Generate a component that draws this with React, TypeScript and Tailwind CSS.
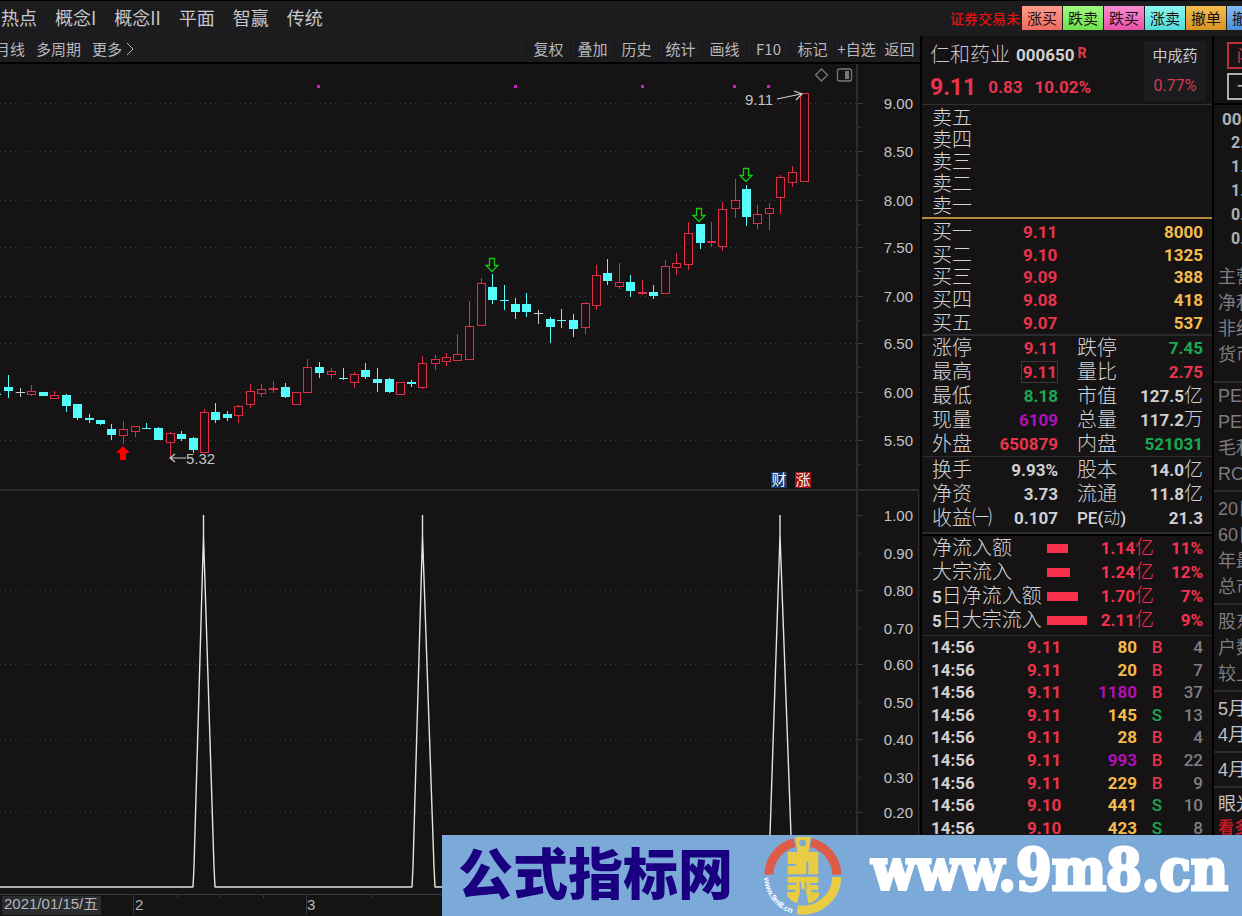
import React from "react";

type Kind = "up" | "down" | "flat";
type Candle = [x: number, high: number, top: number, bottom: number, low: number, kind: Kind];

const CANDLES: Candle[] = [
  [8, 375, 387, 391, 398, "down"],
  [20, 388, 392, 392, 397, "flat"],
  [31, 385, 391, 394, 396, "up"],
  [43, 392, 392, 396, 396, "down"],
  [54, 391, 395, 398, 398, "up"],
  [66, 394, 395, 406, 412, "down"],
  [77, 404, 404, 418, 420, "down"],
  [89, 414, 418, 420, 423, "down"],
  [100, 420, 420, 424, 425, "down"],
  [111, 424, 429, 435, 440, "down"],
  [123, 421, 429, 435, 444, "up"],
  [135, 426, 426, 431, 437, "up"],
  [146, 423, 428, 428, 429, "down"],
  [158, 427, 428, 440, 440, "down"],
  [170, 432, 433, 442, 458, "up"],
  [181, 431, 434, 439, 441, "down"],
  [193, 437, 438, 450, 453, "down"],
  [204, 409, 412, 452, 453, "up"],
  [215, 403, 412, 420, 423, "down"],
  [227, 411, 414, 418, 421, "down"],
  [238, 405, 406, 415, 423, "up"],
  [250, 384, 391, 404, 408, "up"],
  [261, 384, 389, 393, 397, "up"],
  [273, 381, 388, 390, 393, "up"],
  [285, 383, 387, 397, 398, "down"],
  [296, 392, 392, 404, 404, "up"],
  [307, 359, 367, 392, 392, "up"],
  [319, 362, 367, 373, 378, "down"],
  [331, 368, 371, 374, 379, "up"],
  [343, 368, 378, 378, 380, "down"],
  [354, 372, 374, 382, 388, "up"],
  [365, 363, 370, 377, 379, "down"],
  [377, 368, 379, 383, 392, "down"],
  [389, 378, 379, 392, 393, "down"],
  [400, 382, 382, 394, 395, "up"],
  [411, 380, 382, 384, 387, "down"],
  [422, 356, 363, 387, 389, "up"],
  [435, 355, 359, 363, 370, "up"],
  [446, 353, 357, 361, 366, "up"],
  [457, 334, 354, 360, 361, "up"],
  [469, 301, 326, 359, 359, "up"],
  [481, 278, 283, 325, 325, "up"],
  [492, 274, 287, 300, 304, "down"],
  [504, 285, 300, 300, 310, "down"],
  [515, 298, 304, 312, 319, "down"],
  [526, 293, 304, 312, 317, "down"],
  [538, 310, 313, 313, 324, "flat"],
  [550, 317, 319, 327, 343, "down"],
  [561, 309, 320, 320, 328, "down"],
  [573, 314, 320, 329, 337, "down"],
  [585, 302, 303, 327, 334, "up"],
  [596, 265, 275, 305, 310, "up"],
  [607, 259, 273, 281, 285, "down"],
  [619, 263, 282, 286, 289, "up"],
  [630, 275, 282, 291, 297, "down"],
  [642, 280, 292, 294, 295, "up"],
  [653, 285, 292, 296, 299, "down"],
  [665, 260, 266, 293, 293, "up"],
  [676, 253, 263, 267, 275, "up"],
  [688, 222, 233, 264, 270, "up"],
  [700, 224, 224, 243, 249, "down"],
  [711, 222, 241, 243, 247, "up"],
  [722, 202, 209, 246, 251, "up"],
  [735, 179, 200, 208, 218, "up"],
  [746, 185, 189, 217, 226, "down"],
  [757, 205, 214, 223, 229, "up"],
  [769, 203, 208, 213, 230, "up"],
  [780, 175, 177, 197, 214, "up"],
  [792, 166, 172, 182, 187, "up"],
  [804, 93, 93, 181, 181, "up"],
];

const PRICE_AXIS: [number, string][] = [
  [103, "9.00"], [151, "8.50"], [200, "8.00"], [247, "7.50"],
  [296, "7.00"], [343, "6.50"], [392, "6.00"], [440, "5.50"],
];
const SIGNAL_AXIS: [number, string, boolean][] = [
  [515, "1.00", false], [553, "0.90", false], [590, "0.80", true],
  [628, "0.70", false], [664, "0.60", true], [702, "0.50", false],
  [739, "0.40", true], [777, "0.30", false], [812, "0.20", true],
];

function CandleShape({ c }: { c: Candle }) {
  const [x, high, top, bottom, low, kind] = c;
  const color = kind === "up" ? "#dc3048" : kind === "down" ? "#54fcfc" : "#c8c8c8";
  if (top === bottom) {
    return (
      <g fill={color}>
        <rect x={x} y={high} width={1} height={low - high} />
        <rect x={x - 4} y={top} width={9} height={1} />
      </g>
    );
  }
  if (kind === "up" && bottom - top > 2) {
    return (
      <g>
        <rect x={x} y={high} width={1} height={top - high} fill={color} />
        <rect x={x} y={bottom} width={1} height={low - bottom} fill={color} />
        <rect x={x - 3.5} y={top + 0.5} width={8} height={bottom - top} fill="#1e0f15" stroke={color} />
      </g>
    );
  }
  return (
    <g fill={color}>
      <rect x={x} y={high} width={1} height={low - high} />
      <rect x={x - 4} y={top} width={9} height={bottom - top} />
    </g>
  );
}

function Chart() {
  return (
    <svg
      viewBox="0 64 920 852"
      className="block h-auto w-full font-['Liberation_Sans','Noto_Sans_CJK_SC',sans-serif]"
      role="img"
      aria-label="K线图"
    >
      <g stroke="#3b3b3d" strokeDasharray="1 4" shapeRendering="crispEdges">
        {PRICE_AXIS.map(([y]) => <line key={y} x1={0} x2={857} y1={y + 0.5} y2={y + 0.5} />)}
        {SIGNAL_AXIS.filter((a) => a[2]).map(([y]) => (
          <line key={y} x1={0} x2={857} y1={y + 0.5} y2={y + 0.5} />
        ))}
      </g>
      <g stroke="#38383f" shapeRendering="crispEdges">
        <line x1={857} x2={857} y1={64} y2={895} strokeWidth={2} stroke="#2c2c36" />
        <line x1={0} x2={918} y1={490} y2={490} strokeWidth={2} stroke="#2d2d31" />
        <line x1={918.5} x2={918.5} y1={490} y2={916} stroke="#2c2c33" />
        <line x1={0} x2={918} y1={894.5} y2={894.5} />
        {PRICE_AXIS.map(([y]) => (
          <g key={y}>
            <line x1={858} x2={863} y1={y + 0.5} y2={y + 0.5} />
            <line x1={858} x2={860} y1={y + 24.5} y2={y + 24.5} />
          </g>
        ))}
        {SIGNAL_AXIS.map(([y, , major], i) => (
          <line key={y} x1={858} x2={major || i === 0 ? 863 : 860} y1={y + 0.5} y2={y + 0.5} />
        ))}
        {[177, 220, 263, 372].map((x) => <line key={x} x1={x + 0.5} x2={x + 0.5} y1={894} y2={898} />)}
        {[133, 306].map((x) => <line key={x} x1={x + 0.5} x2={x + 0.5} y1={894} y2={914} />)}
      </g>
      <g fill="#c4c4c6" fontSize={15} textAnchor="end">
        {PRICE_AXIS.map(([y, t]) => <text key={t} x={913} y={y + 6}>{t}</text>)}
        {SIGNAL_AXIS.map(([y, t]) => <text key={t} x={913} y={y + 6}>{t}</text>)}
      </g>

      <g shapeRendering="crispEdges">
        <rect x={0} y={394} width={1} height={1} fill="#54fcfc" />
        {CANDLES.map((c) => <CandleShape key={c[0]} c={c} />)}
      </g>
      <g fill="#c822c8">
        {[318, 515, 642, 734, 768].map((x) => (
          <rect key={x} x={x - 1} y={85} width={3} height={3} />
        ))}
      </g>

      <g fill="none" stroke="#14c814" strokeWidth={1.3}>
        {[[492, 258], [699, 208], [746, 168]].map(([x, y]) => (
          <path key={x} d={`M${x - 2.5} ${y + 0.5}h5v7h3.5l-6 6l-6 -6h3.5z`} />
        ))}
      </g>
      <path d="M123 446l7 7h-4v7h-6v-7h-4z" fill="#ff0000" />

      <g fill="none" stroke="#cfcfcf" strokeWidth={1.2}>
        <path d="M186 458H170M175 454l-5 4l5 4" />
        <path d="M777 99L801 94M794 91l8 3l-6 6" />
      </g>
      <g fill="#c4c4c6" fontSize={15}>
        <text x={186} y={464}>5.32</text>
        <text x={745} y={105}>9.11</text>
      </g>

      <g fill="none" stroke="#77777a" strokeWidth={1.3}>
        <path d="M821.500 69l6 6l-6 6l-6 -6z" />
        <rect x={837.500} y={69} width={14} height={12} rx={2} />
      </g>
      <rect x={845} y={71} width={4} height={8} fill="#77777a" />

      <rect x={771} y={472} width={16} height={16} fill="#123a64" />
      <rect x={795} y={472} width={16} height={16} fill="#a01016" />
      <g fill="#f4f4f4" fontSize={15} textAnchor="middle">
        <text x={779} y={485}>财</text>
        <text x={803} y={485}>涨</text>
      </g>

      <g fill="none" stroke="#e4e4e4" strokeWidth={1.4} strokeLinejoin="bevel">
        <path d="M0 887H193L194 867L203.500 535V515V535L214 867L215 887H412L413 867L422.500 535V515V535L434 867L435 887H769L770 835L780 535V515V535L791 835L792 887H857" />
      </g>

      <rect x={2} y={896} width={99} height={19} fill="#2a2c30" />
      <g fill="#b4b6ba" fontSize={15}>
        <text x={4} y={909}>2021/01/15/五</text>
        <text x={135} y={910}>2</text>
        <text x={307} y={910}>3</text>
      </g>
    </svg>
  );
}

const NAV = ["热点", "概念I", "概念II", "平面", "智赢", "传统"];
const TOOLS = ["复权", "叠加", "历史", "统计", "画线", "F10", "标记", "+自选", "返回"];
const ORDERS: [string, string][] = [
  ["涨买", "from-[#ff9a8c] to-[#f06a5e]"],
  ["跌卖", "from-[#a0fa80] to-[#6ee04e]"],
  ["跌买", "from-[#f88cd0] to-[#e850a8]"],
  ["涨卖", "from-[#8cf6f0] to-[#50dcd8]"],
  ["撤单", "from-[#f4bc50] to-[#d89420]"],
  ["撤买", "from-[#80bcf4] to-[#4c90dc]"],
];

function TopBar() {
  return (
    <header className="flex h-9 justify-between overflow-hidden border-t border-black bg-[#1c1c1e]">
      <nav className="flex gap-[18px] pl-px pt-1 text-[18px] leading-6">
        {NAV.map((t) => <a key={t} href="#" className="whitespace-nowrap">{t}</a>)}
      </nav>
      <div className="flex w-[292px] shrink-0 items-start overflow-hidden pt-[5px]">
        <span className="w-[72px] shrink-0 overflow-hidden whitespace-nowrap text-[14px] font-medium leading-6 text-[#e01010]">
          证券交易未
        </span>
        <div className="flex gap-px">
          {ORDERS.map(([t, c]) => (
            <button key={t} className={`h-6 w-10 shrink-0 whitespace-nowrap bg-linear-to-b text-[15px] leading-6 text-[#181010] ${c}`}>
              {t}
            </button>
          ))}
        </div>
      </div>
    </header>
  );
}

function Toolbar() {
  return (
    <div className="flex h-7 items-center justify-between overflow-hidden border-b-2 border-black bg-[#1c1c1e] text-[15px] leading-5 text-[#b8b8bc]">
      <div className="-ml-[5px] flex items-center gap-[11px]">
        <button>月线</button>
        <button>多周期</button>
        <button className="flex items-center gap-1">
          更多
          <svg width="9" height="14" viewBox="0 0 9 14" fill="none" stroke="currentColor" aria-hidden="true">
            <path d="M1 1l6 6l-6 6" />
          </svg>
        </button>
      </div>
      <div className="flex">
        {TOOLS.map((t) => (
          <button key={t} className="w-[44px] whitespace-nowrap border-l border-[#141416] text-center last:w-[42px]">
            <span className="-mx-1">{t}</span>
          </button>
        ))}
      </div>
    </div>
  );
}

const RED = "text-[#e8344c]";
const GREEN = "text-[#1ca850]";
const PURPLE = "text-[#b010b8]";
const WHITE = "text-[#d0d0d4]";
const GOLD = "text-[#f4bc4c]";

const BUYS = [["买一", "9.11", "8000"], ["买二", "9.10", "1325"], ["买三", "9.09", "388"], ["买四", "9.08", "418"], ["买五", "9.07", "537"]];

type Stat = [string, string, string, string, string, string];
const STATS_A: Stat[] = [
  ["涨停", "9.11", RED, "跌停", "7.45", GREEN],
  ["最高", "9.11", RED, "量比", "2.75", RED],
  ["最低", "8.18", GREEN, "市值", "127.5亿", WHITE],
  ["现量", "6109", PURPLE, "总量", "117.2万", WHITE],
  ["外盘", "650879", RED, "内盘", "521031", GREEN],
];
const STATS_B: Stat[] = [
  ["换手", "9.93%", WHITE, "股本", "14.0亿", WHITE],
  ["净资", "3.73", WHITE, "流通", "11.8亿", WHITE],
  ["收益㈠", "0.107", WHITE, "PE(动)", "21.3", WHITE],
];
const FLOWS: [string, string, string, string][] = [
  ["净流入额", "w-[21px]", "1.14亿", "11%"],
  ["大宗流入", "w-[23px]", "1.24亿", "12%"],
  ["5日净流入额", "w-[31px]", "1.70亿", "7%"],
  ["5日大宗流入", "w-[40px]", "2.11亿", "9%"],
];
const TICKS: [string, string, string, string][] = [
  ["9.11", "80", "B", "4"], ["9.11", "20", "B", "7"], ["9.11", "1180", "B", "37"],
  ["9.11", "145", "S", "13"], ["9.11", "28", "B", "4"], ["9.11", "993", "B", "22"],
  ["9.11", "229", "B", "9"], ["9.10", "441", "S", "10"], ["9.10", "423", "S", "8"],
];

/* Digits are set bold, Chinese units stay light. */
function Value({ text }: { text: string }) {
  const unit = /[亿万]$/.test(text) ? text.slice(-1) : "";
  return (
    <>
      {unit ? text.slice(0, -1) : text}
      {unit && <span className="text-[19px] font-light">{unit}</span>}
    </>
  );
}

const LABEL = "text-left font-light whitespace-nowrap text-[#d4d4d8]";

function StatTable({ rows, boxed }: { rows: Stat[]; boxed?: boolean }) {
  return (
    <table className="w-full table-fixed border-collapse font-bold">
      <colgroup>
        <col className="w-[56px]" />
        <col className="w-[70px]" />
        <col className="w-[75px]" />
        <col />
      </colgroup>
      <tbody>
        {rows.map(([l1, v1, c1, l2, v2, c2]) => (
          <tr key={l1} className="h-6 leading-6">
            <th className={`text-[20px] ${LABEL}`}>{l1}</th>
            <td className={`text-right ${c1}`}>
              {boxed && l1 === "最高" ? (
                <span className="inline-block border border-[#3a3a3c] pl-px leading-5">{v1}</span>
              ) : (
                v1
              )}
            </td>
            {l2.startsWith("PE") ? (
              <th className={`pl-[19px] text-[17px] ${LABEL}`}>
                <span className="font-medium">PE(</span>动<span className="font-medium">)</span>
              </th>
            ) : (
              <th className={`pl-[19px] text-[20px] ${LABEL}`}>{l2}</th>
            )}
            <td className={`whitespace-nowrap text-right ${c2}`}><Value text={v2} /></td>
          </tr>
        ))}
      </tbody>
    </table>
  );
}

function QuotePanel() {
  return (
    <section className="flex w-[292px] shrink-0 flex-col border-l-2 border-black font-['Roboto','Noto_Sans_CJK_SC',sans-serif] text-[17px]">
      <div className="flex h-[69px] justify-between border-b border-[#303034] pl-2 pr-[6px]">
        <div className="flex flex-col">
          <h1 className="flex h-9 items-center gap-[6px] whitespace-nowrap pt-px text-[20px] font-light leading-6">
            仁和药业
            <span className="text-[17px] font-bold text-[#d0d0d4]">000650</span>
            <span className="-ml-[3px] pb-1 text-[14px] font-bold leading-4 text-[#e03c48]">R</span>
          </h1>
          <p className="flex h-8 items-center gap-3 font-bold text-[#e8344c]">
            <span className="text-[23px]">9.11</span>
            <span>0.83</span>
            <span>10.02%</span>
          </p>
        </div>
        <div className="mt-[5px] flex h-[60px] w-[62px] flex-col items-center justify-between bg-[#1b1c1f] py-[5px] text-[15px] leading-5">
          <span>中成药</span>
          <span className="text-[16px] text-[#d83850]">0.77%</span>
        </div>
      </div>

      <div className="grid h-[114px] auto-rows-fr border-b-2 border-[#b48c3c] pl-[10px] pt-[2px]">
        {["卖五", "卖四", "卖三", "卖二", "卖一"].map((t) => (
          <div key={t} className="flex items-center text-[20px] font-light leading-5 text-[#d4d4d8]">{t}</div>
        ))}
      </div>

      <div className="grid h-[117px] auto-rows-fr border-b-2 border-[#2c2c30] pl-[10px] pr-[9px] pt-[2px] font-bold">
        {BUYS.map(([l, p, v]) => (
          <div key={l} className="flex items-center leading-5">
            <span className="w-[91px] text-[20px] font-light text-[#d4d4d8]">{l}</span>
            <span className={RED}>{p}</span>
            <span className="ml-auto text-[#f4bc4c]">{v}</span>
          </div>
        ))}
      </div>

      <div className="border-b border-[#2c2c30] pl-[10px] pr-[9px]">
        <StatTable rows={STATS_A} boxed />
      </div>
      <div className="border-b-2 border-[#2c2c30] pb-[2px] pl-[10px] pr-[9px] pt-px">
        <StatTable rows={STATS_B} />
      </div>

      <div className="border-b border-t-2 border-[#2c2c30] border-t-black pb-[3px] pl-[10px] pr-[9px] font-bold text-[#f8304c]">
        {FLOWS.map(([l, w, v, p]) => (
          <div key={l} className="flex h-6 items-center whitespace-nowrap leading-6">
            <span className="w-[115px] text-[20px] font-light text-[#d4d4d8]">
              {l.startsWith("5") ? <><span className="text-[17px] font-bold">5</span>{l.slice(1)}</> : l}
            </span>
            <span className={`h-[9px] bg-[#f8304c] ${w}`} />
            <span className="ml-auto"><Value text={v} /></span>
            <span className="w-[49px] text-right">{p}</span>
          </div>
        ))}
      </div>

      <table className="h-[203px] w-full table-fixed border-collapse font-bold leading-5">
        <colgroup>
          <col className="w-[105px]" />
          <col className="w-[34px]" />
          <col className="w-[76px]" />
          <col className="w-[40px]" />
          <col />
        </colgroup>
        <tbody>
          {TICKS.map(([p, v, side, n], i) => (
            <tr key={i}>
              <td className={`pl-[9px] ${WHITE}`}>14:56</td>
              <td className={`whitespace-nowrap ${RED}`}>{p}</td>
              <td className={`text-right ${v === "1180" || v === "993" ? PURPLE : GOLD}`}>{v}</td>
              <td className={`text-center font-medium ${side === "B" ? RED : GREEN}`}>{side}</td>
              <td className="pr-[9px] text-right font-medium text-[#808084]">{n}</td>
            </tr>
          ))}
        </tbody>
      </table>
    </section>
  );
}

function Group({ items, className = "" }: { items: string[]; className?: string }) {
  return (
    <div className={`border-b-2 border-[#2c2c30] pl-1 leading-[26px] ${className}`}>
      {items.map((t, i) => <div key={i}>{t}</div>)}
    </div>
  );
}

function SidePanel() {
  return (
    <aside className="w-[30px] shrink-0 overflow-hidden whitespace-nowrap border-l-2 border-black font-['Liberation_Sans','Noto_Sans_CJK_SC',sans-serif] text-[18px] text-[#7c7c80]">
      <div className="flex h-[69px] flex-col gap-1 border-b-2 border-black pl-[13px] pt-[6px]">
        <button className="h-[27px] w-12 shrink-0 border-2 border-[#c02c3c] pl-2 text-left text-[16px] leading-[22px] text-[#e03448]">闪买</button>
        <button className="h-[27px] w-12 shrink-0 border-2 border-[#b0b0b4] pl-2 text-left leading-5 text-[#c0c0c4]">一</button>
      </div>
      <div className="pb-[13px] pl-[17px] pt-[2px] font-['Roboto',sans-serif] text-[16px] font-bold leading-6 text-[#b0b0b4]">
        <div className="-ml-[9px] text-[17px]">000</div>
        {["2.", "1.", "1.", "0.", "0."].map((t, i) => <div key={i}>{t}</div>)}
      </div>
      <Group items={["主营", "净利", "非经", "货币"]} className="pb-[13px]" />
      <Group items={["PE", "PE", "毛利", "ROE"]} className="pb-[3px]" />
      <Group items={["20日", "60日", "年最", "总市"]} className="pb-[3px] pt-[4px]" />
      <Group items={["股东", "户数", "较上"]} className="pb-[3px] pt-[4px]" />
      <Group items={["5月", "4月"]} className="pb-[3px] pt-[4px] text-[#c0c0c4]" />
      <Group items={["4月"]} className="pb-[3px] pt-[4px] text-[#c0c0c4]" />
      <div className="pl-1 pt-[4px] leading-6 text-[#c0c0c4]">
        <div>眼光</div>
        <div className="text-[16px] font-bold text-[#c41824]">看多</div>
      </div>
    </aside>
  );
}

function CoinLogo() {
  return (
    <svg width="80" height="81" viewBox="968 44 240 243" aria-hidden="true" className="shrink-0">
      <defs>
        <path id="coin-arc" d="M971 172A116 116 0 0 0 1070 282" />
      </defs>
      <g fill="none" strokeWidth="27">
        <path d="M985.500 163A102 102 0 0 1 1062 67" stroke="#dc5c48" />
        <path d="M1112 67A102 102 0 0 1 1189.500 163" stroke="#dc5c48" />
        <path d="M1189.500 170A102 102 0 0 1 1071 268" stroke="#e8cc44" />
      </g>
      <path fillRule="evenodd" fill="#e8cc44" d="M1065 50H1111L1105 95H1134V162H1104V124H1098V162H1042V137H1068V131H1042V95H1071ZM1087 58A10 10 0 1 0 1087 78A10 10 0 1 0 1087 58Z" />
      <path fill="#e8cc44" d="M1042 169H1134V188H1108V194H1134V209H1111L1116 216H1136V226Q1125 245 1104 249L1096 207H1080L1071 249Q1048 242 1040 224V215H1062L1067 208H1042V193H1068V187H1042Z" />
      <path d="M1080 186V208M1096 186V208" stroke="#7ba9d8" strokeWidth="5" />
      <text fill="#ffffff" fontSize="24" fontFamily="Liberation Sans, sans-serif" fontWeight="bold">
        <textPath href="#coin-arc">www.9m8.cn</textPath>
      </text>
    </svg>
  );
}

export default function App() {
  return (
    <div className="relative flex min-h-screen flex-col overflow-hidden bg-[#151314] font-['Noto_Sans_CJK_SC',sans-serif] text-[#c8c8cc]">
      <TopBar />
      <main className="flex flex-1">
        <section className="min-w-0 flex-1">
          <Toolbar />
          <Chart />
        </section>
        <QuotePanel />
        <SidePanel />
      </main>
      <a
        href="#"
        className="absolute bottom-0 right-0 flex h-[81px] w-[800px] items-center justify-between overflow-hidden bg-[#7ba9d8] pl-4 pr-[14px]"
      >
        <span className="whitespace-nowrap pb-3 text-[55px] font-black leading-[68px] text-[#1a0080]">公式指标网</span>
        <span className="ml-[30px]"><CoinLogo /></span>
        <span className="ml-auto whitespace-nowrap pb-3 font-['DejaVu_Serif_Condensed','DejaVu_Serif',serif] text-[57px] font-bold leading-[68px] text-white [-webkit-text-stroke:3px_white]">
          www.9m8.cn
        </span>
      </a>
    </div>
  );
}
